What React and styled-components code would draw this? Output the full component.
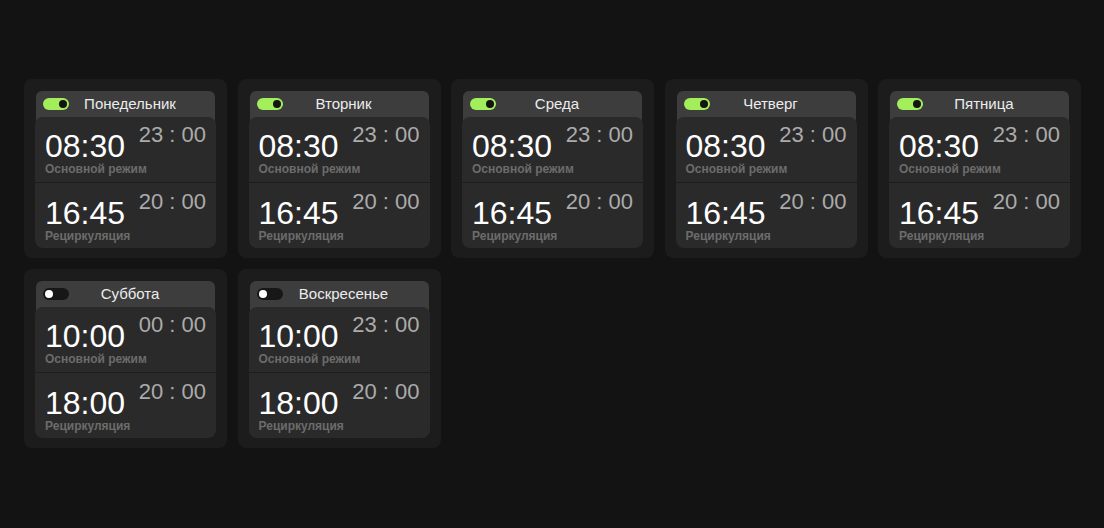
import styled, { createGlobalStyle } from 'styled-components';

const GlobalStyle = createGlobalStyle`
  html, body {
    margin: 0;
    padding: 0;
    background: #131313;
  }
  body {
    font-family: "Liberation Sans", Arial, sans-serif;
  }
`;

const Page = styled.div`
  min-height: 528px;
  padding: 79px 0 0 24px;
  box-sizing: border-box;
`;

const Grid = styled.div`
  display: grid;
  grid-template-columns: repeat(5, 203px);
  column-gap: 10.5px;
  row-gap: 11px;
`;

const Card = styled.div`
  background: #1c1c1c;
  border-radius: 8px;
  padding: 12px 11px 10px 11px;
`;

const Header = styled.div`
  display: flex;
  align-items: center;
  height: 25px;
  padding: 0 0 9px 7px;
  margin: 0 1px;
  background: #3d3d3d;
  border-radius: 6px 6px 0 0;
`;

const Toggle = styled.div`
  position: relative;
  width: 26px;
  height: 12px;
  border-radius: 6px;
  flex-shrink: 0;
  background: ${(p) => (p.$on ? '#a2ef5b' : '#171717')};

  &::after {
    content: '';
    position: absolute;
    top: 2px;
    left: ${(p) => (p.$on ? '16px' : '2px')};
    width: 8px;
    height: 8px;
    border-radius: 50%;
    background: ${(p) => (p.$on ? '#141414' : '#ffffff')};
  }
`;

const DayName = styled.div`
  flex: 1;
  text-align: center;
  padding-right: 24px;
  font-size: 15px;
  color: #ececec;
  white-space: nowrap;
`;

const Body = styled.div`
  position: relative;
  margin-top: -8px;
  background: #2a2a2a;
  border-radius: 8px;
  overflow: hidden;
`;

const Section = styled.div`
  display: grid;
  grid-template-columns: 1fr auto;
  grid-template-areas:
    "time end"
    "label label";
  align-items: start;
  padding: 7px 10px 7px 10px;

  & + & {
    border-top: 1px solid #1d1d1d;
    padding-top: 8px;
    padding-bottom: 6px;
  }
`;

const BigTime = styled.div`
  grid-area: time;
  margin-top: 6px;
  font-size: 32px;
  line-height: 1;
  color: #ffffff;
`;

const Label = styled.div`
  grid-area: label;
  margin-top: 1px;
  font-size: 12px;
  line-height: 1;
  font-weight: 700;
  color: #6c6c6c;
  white-space: nowrap;
`;

const SmallTime = styled.div`
  grid-area: end;
  font-size: 22px;
  line-height: 1;
  color: #ababab;
  white-space: pre;
`;

const days = [
  { name: 'Понедельник', on: true, main: ['08:30', '23 : 00'], rec: ['16:45', '20 : 00'] },
  { name: 'Вторник', on: true, main: ['08:30', '23 : 00'], rec: ['16:45', '20 : 00'] },
  { name: 'Среда', on: true, main: ['08:30', '23 : 00'], rec: ['16:45', '20 : 00'] },
  { name: 'Четверг', on: true, main: ['08:30', '23 : 00'], rec: ['16:45', '20 : 00'] },
  { name: 'Пятница', on: true, main: ['08:30', '23 : 00'], rec: ['16:45', '20 : 00'] },
  { name: 'Суббота', on: false, main: ['10:00', '00 : 00'], rec: ['18:00', '20 : 00'] },
  { name: 'Воскресенье', on: false, main: ['10:00', '23 : 00'], rec: ['18:00', '20 : 00'] },
];

const Mode = ({ time, end, label }) => (
  <Section>
    <BigTime>{time}</BigTime>
    <SmallTime>{end}</SmallTime>
    <Label>{label}</Label>
  </Section>
);

export default function App() {
  return (
    <>
      <GlobalStyle />
      <Page>
        <Grid>
          {days.map((d) => (
            <Card key={d.name}>
              <Header>
                <Toggle $on={d.on} />
                <DayName>{d.name}</DayName>
              </Header>
              <Body>
                <Mode time={d.main[0]} end={d.main[1]} label="Основной режим" />
                <Mode time={d.rec[0]} end={d.rec[1]} label="Рециркуляция" />
              </Body>
            </Card>
          ))}
        </Grid>
      </Page>
    </>
  );
}
